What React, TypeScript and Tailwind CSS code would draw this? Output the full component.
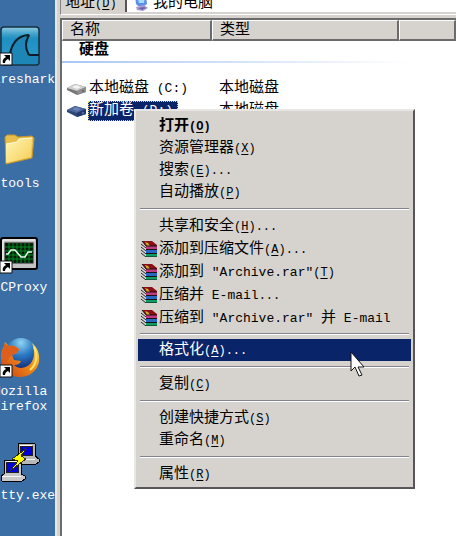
import { Fragment } from 'react';
import type { ReactNode } from 'react';
import clsx from 'clsx';

interface MenuEntry {
  text: string;
  hotkey?: string;
  dots?: boolean;
  bold?: boolean;
  archive?: boolean;
  active?: boolean;
}

const menuGroups: MenuEntry[][] = [
  [
    { text: '打开', hotkey: 'O', bold: true },
    { text: '资源管理器', hotkey: 'X' },
    { text: '搜索', hotkey: 'E', dots: true },
    { text: '自动播放', hotkey: 'P' },
  ],
  [
    { text: '共享和安全', hotkey: 'H', dots: true },
    { text: '添加到压缩文件', hotkey: 'A', dots: true, archive: true },
    { text: '添加到 "Archive.rar"', hotkey: 'T', archive: true },
    { text: '压缩并 E-mail', dots: true, archive: true },
    { text: '压缩到 "Archive.rar" 并 E-mail', archive: true },
  ],
  [{ text: '格式化', hotkey: 'A', dots: true, active: true }],
  [{ text: '复制', hotkey: 'C' }],
  [
    { text: '创建快捷方式', hotkey: 'S' },
    { text: '重命名', hotkey: 'M' },
  ],
  [{ text: '属性', hotkey: 'R' }],
];

// Latin runs are set smaller so that two of them take about one Chinese character
function Mixed({ children }: { children: string }) {
  return (
    <>
      {children.split(/([\x20-\x7e]+)/).map((part, i) =>
        i % 2 === 1 ? (
          <span key={i} className="text-[13px]">
            {part}
          </span>
        ) : (
          <Fragment key={i}>{part}</Fragment>
        ),
      )}
    </>
  );
}

function Hotkey({ letter }: { letter: string }) {
  return (
    <span className="text-[12px]">
      (<u className="underline-offset-2">{letter}</u>)
    </span>
  );
}

function ShortcutArrow() {
  return (
    <g>
      <path d="M0 27h12v12H0z" fill="#fff" stroke="#111" />
      <path d="M4 29h6v6l-2-2c-2 1-3 2-3 4H3c-1-3 1-5 3-6z" fill="#000" />
    </g>
  );
}

function SharkIcon() {
  return (
    <svg viewBox="0 0 40 40" className="size-10" aria-hidden="true">
      <defs>
        <linearGradient id="sea" x1="0" y1="0" x2="0" y2="1">
          <stop offset="0" stopColor="#8fcbe2" />
          <stop offset="0.2" stopColor="#3ba0c9" />
          <stop offset="0.3" stopColor="#2090c2" />
          <stop offset="1" stopColor="#2b9ccb" />
        </linearGradient>
      </defs>
      <rect x="1" y="1" width="38" height="38" rx="3" fill="url(#sea)" stroke="#14303f" strokeWidth="1.5" />
      <path d="M10 30c2-12 8-19 19-21-4 6-4 13-1 19h10v10H11z" fill="#1e86b6" />
      <path
        d="M10 28c2-11 8-18 18-19 1 0 1 1 0 2-3 6-2 12 0 16 0 1 1 2 3 2h8"
        fill="none"
        stroke="#0d1c26"
        strokeWidth="2"
      />
      <ShortcutArrow />
    </svg>
  );
}

function FolderIcon() {
  return (
    <svg viewBox="0 0 40 40" className="size-10" aria-hidden="true">
      <defs>
        <linearGradient id="folder" x1="0" y1="0" x2="1" y2="1">
          <stop offset="0" stopColor="#fff6b5" />
          <stop offset="1" stopColor="#f5cd55" />
        </linearGradient>
      </defs>
      <path d="M5 7l2-2h8l3 2 14-1 2 2-2 20-26 6z" fill="#e9bd49" stroke="#c4942b" />
      <path d="M6 14l11-2 2-3 13-1-1 19-25 6z" fill="url(#folder)" />
      <path d="M6 14l11-2 2-3 13-1" fill="none" stroke="#fffbdc" />
    </svg>
  );
}

function ScopeIcon() {
  return (
    <svg viewBox="0 0 40 40" className="size-10" aria-hidden="true">
      <rect x="1" y="4" width="36" height="31" rx="2" fill="#c3c3c3" stroke="#000" strokeWidth="2" />
      <path d="M3 33V6h32" fill="none" stroke="#fff" />
      <rect x="5" y="9" width="28" height="20" fill="#001b00" stroke="#222" />
      <path
        d="M9 9v20M13 9v20M17 9v20M21 9v20M25 9v20M29 9v20M5 13h28M5 17h28M5 21h28M5 25h28"
        stroke="#008a24"
        fill="none"
      />
      <path d="M6 20h2l3-4h4l6 7h4l3-5h4" fill="none" stroke="#e8fff0" strokeWidth="1.5" />
      <ShortcutArrow />
    </svg>
  );
}

function FoxIcon() {
  return (
    <svg viewBox="0 0 40 40" className="size-10" aria-hidden="true">
      <defs>
        <radialGradient id="globe" cx="0.5" cy="0.15" r="0.8">
          <stop offset="0" stopColor="#8ed4f2" />
          <stop offset="0.5" stopColor="#2b78c2" />
          <stop offset="1" stopColor="#132f7c" />
        </radialGradient>
        <linearGradient id="tail" x1="1" y1="0" x2="0" y2="1">
          <stop offset="0" stopColor="#ffe65c" />
          <stop offset="0.45" stopColor="#ee8d1c" />
          <stop offset="1" stopColor="#c9380f" />
        </linearGradient>
      </defs>
      <circle cx="21" cy="16" r="16" fill="url(#globe)" />
      <path
        d="M32 5c6 5 8 12 7 19-2 9-10 15-19 15C9 39 1 31 1 20 1 15 2 11 4 8l1-4 4 4c4-1 7 0 10 3l-2 4-5 2 2 5 7 1c-1 3-4 4-7 4 5 5 13 3 17-2 4-6 4-12 1-20z"
        fill="url(#tail)"
      />
      <path d="M5 6c-4 7-4 15 0 22 3-5 3-9 8-11l5-3 1-3c-3-3-6-4-10-3z" fill="#dc5f1e" />
      <path d="M34 9c4 8 3 17-4 23" fill="none" stroke="#ffe36a" strokeWidth="2" />
      <ShortcutArrow />
    </svg>
  );
}

function PuttyIcon() {
  return (
    <svg viewBox="0 0 40 40" className="size-10" shapeRendering="crispEdges" aria-hidden="true">
      <path d="M19 1h15l1 1v12l4 3v3l-3 2H17l-1-2v-4l2-2V2z" fill="#b7b7b7" stroke="#000" />
      <path d="M20 3h12" stroke="#fff" />
      <rect x="20" y="4" width="12" height="9" fill="#0000d8" stroke="#222" />
      <path d="M17 17h18" stroke="#f4f4f4" />
      <path d="M5 18h15l1 1v13l4 2v3l-3 2H2l-1-2v-3l3-2V19z" fill="#c8c8c8" stroke="#000" />
      <path d="M6 19h13" stroke="#fff" />
      <rect x="6" y="20" width="12" height="10" fill="#0000d8" stroke="#222" />
      <path d="M2 34h19" stroke="#f4f4f4" />
      <path d="M27 6l-15 11 6 2-8 10 16-12-5-3z" fill="#ffff00" stroke="#303000" />
    </svg>
  );
}

function DriveIcon({ selected = false }: { selected?: boolean }) {
  return (
    <svg viewBox="0 0 20 14" className="h-[14px] w-5 shrink-0" aria-hidden="true">
      <path d="M0 6l8-4 11 3v5l-9 3-10-5z" fill={selected ? '#2c4677' : '#777'} />
      <path d="M0 6l8-4 11 3-9 4z" fill={selected ? '#4d679b' : '#cfcfcf'} />
      <path d="M5 5l4-2 5 2-4 2z" fill={selected ? '#6c85b5' : '#f4f4f4'} />
      <path d="M10 9l9-4v5l-9 3z" fill={selected ? '#223a6c' : '#8d8d8d'} />
      <path d="M15 9h2" stroke={selected ? '#7aa0d0' : '#4b4b4b'} />
    </svg>
  );
}

function ComputerIcon() {
  return (
    <svg viewBox="0 0 16 16" className="size-4 shrink-0" aria-hidden="true">
      <path d="M2 0h11l1 8-3 2H5L3 8z" fill="#5c8fe8" />
      <path d="M4 0h8l-1 7H6z" fill="#a8dcfb" />
      <path d="M3 11l8-2 4 3-5 3-6-1z" fill="#a89bd4" />
      <path d="M5 12l6-1 2 1-4 2z" fill="#6f62a8" />
    </svg>
  );
}

function BooksIcon() {
  return (
    <svg viewBox="0 0 16 16" className="size-4" aria-hidden="true">
      <path d="M1 1l5 4v11l-5-4z" fill="#d9d9d9" />
      <path d="M0 3l5 4M0 6l5 4M0 9l5 4M0 12l5 4" stroke="#222" />
      <path d="M1 0h10l5 4v1H5z" fill="#8c0f14" />
      <path d="M4 1l3 1 2 3H6z" fill="#d2b02a" />
      <path d="M5 5h11v3H5z" fill="#c03a80" />
      <path d="M5 9h11v3H5z" fill="#2468c4" />
      <path d="M5 13h11v3H5z" fill="#0f9c63" />
      <path d="M1 0l4 5h11M5 8.5h11M5 12.5h11M5 16h11" fill="none" stroke="#1a1212" />
    </svg>
  );
}

function PointerIcon() {
  return (
    <svg viewBox="0 0 16 28" className="pointer-events-none absolute left-[212px] top-3 z-10 h-7 w-4" aria-hidden="true">
      <path d="M1 1v19l4-4 4 9 3-1-4-8h6z" fill="#fff" stroke="#111" />
    </svg>
  );
}

function DesktopIcon({ icon, lines }: { icon: ReactNode; lines: string[] }) {
  return (
    <button type="button" className="flex h-[104px] w-10 shrink-0 flex-col items-center">
      {icon}
      <span className="mt-1.5 whitespace-nowrap text-center text-[13px] leading-[15px] text-white">
        {lines.map((line) => (
          <span key={line} className="block">
            {line}
          </span>
        ))}
      </span>
    </button>
  );
}

function MenuItem({ item }: { item: MenuEntry }) {
  return (
    <button
      type="button"
      role="menuitem"
      className={clsx(
        'relative flex h-[22px] w-full items-center gap-0.5 whitespace-pre pl-[3px] text-left',
        item.bold && 'font-bold',
        item.active && 'bg-[#0a246a] text-white',
      )}
    >
      <span className="w-4 shrink-0">{item.archive && <BooksIcon />}</span>
      <span className="pt-0.5">
        <Mixed>{item.text}</Mixed>
        {item.hotkey && <Hotkey letter={item.hotkey} />}
        {item.dots && <span className="text-[12px]">...</span>}
      </span>
      {item.active && <PointerIcon />}
    </button>
  );
}

function ContextMenu() {
  return (
    <div
      role="menu"
      className="absolute left-[134px] top-[109px] w-[281px] border-2 border-b-[#55555a] border-l-[#e9e7e3] border-r-[#55555a] border-t-[#e9e7e3] bg-[#d6d3ce] p-0.5 pt-1"
    >
      {menuGroups.map((group, i) => (
        <Fragment key={i}>
          {i > 0 && (
            <hr
              className={clsx(
                'mx-0.5 h-0.5 border-b border-t border-b-white border-t-[#84828a]',
                i === 2 ? 'my-1' : 'my-[5px]',
              )}
            />
          )}
          <div className={clsx('flex flex-col', i === 1 && 'gap-px')}>
            {group.map((item) => (
              <MenuItem key={item.text} item={item} />
            ))}
          </div>
        </Fragment>
      ))}
    </div>
  );
}

function AddressBar() {
  return (
    <div className="flex h-[15px] items-end border-b border-l border-b-white border-l-[#84828a] bg-[#d6d3ce]">
      <label htmlFor="address" className="flex w-16 items-end whitespace-pre pb-0.5 pl-1 leading-4">
        <span>
          <Mixed>地址</Mixed>
          <Hotkey letter="D" />
        </span>
      </label>
      <div className="mb-0.5 flex h-[13px] flex-1 items-end gap-1 border-l-2 border-[#55555a] bg-white pl-1.5">
        <ComputerIcon />
        <input
          id="address"
          defaultValue="我的电脑"
          className="h-4 min-w-0 flex-1 bg-transparent leading-4 outline-none"
        />
      </div>
    </div>
  );
}

function ExplorerWindow() {
  const headCell =
    'h-5 border-b-2 border-l border-r-2 border-t border-b-[#6b6b6b] border-l-white border-r-[#6b6b6b] border-t-white bg-[#d6d3ce] pb-0 pl-[7px] pt-0.5 text-left font-normal leading-4';

  return (
    <section className="flex min-w-0 flex-1 flex-col border-l-2 border-[#e9e7e3] bg-[#d6d3ce] pl-[3px]">
      <AddressBar />
      <div className="mt-[3px] flex-1 border-l-2 border-t-2 border-[#6b6b6b] bg-white">
        <table className="w-full table-fixed border-separate border-spacing-0">
          <colgroup>
            <col className="w-[150px]" />
            <col className="w-[187px]" />
            <col />
          </colgroup>
          <thead>
            <tr>
              <th className={headCell}>名称</th>
              <th className={headCell}>类型</th>
              <th className={headCell} aria-label="其他" />
            </tr>
          </thead>
          <tbody>
            <tr>
              <th colSpan={3} className="h-[37px] p-0 text-left align-top">
                <span className="block pl-[17px] leading-5">硬盘</span>
                <span className="block h-0.5 w-[350px] max-w-full bg-linear-to-r from-[#a9c6f3] to-white" />
              </th>
            </tr>
            <tr className="h-[22px]">
              <td className="p-0">
                <span className="flex items-center whitespace-pre pl-[5px] leading-5">
                  <DriveIcon />
                  <span className="ml-0.5">
                    <Mixed>本地磁盘 (C:)</Mixed>
                  </span>
                </span>
              </td>
              <td className="p-0 pl-[7px]">本地磁盘</td>
              <td className="p-0" />
            </tr>
            <tr className="h-[22px]" aria-selected="true">
              <td className="p-0">
                <span className="flex items-center whitespace-pre pl-[5px] leading-[18px]">
                  <DriveIcon selected />
                  <span className="ml-px border border-dotted border-[#e8d37a] bg-[#0a246a] pr-1 text-white">
                    <Mixed>新加卷 (D:)</Mixed>
                  </span>
                </span>
              </td>
              <td className="p-0 pl-[7px]">本地磁盘</td>
              <td className="p-0" />
            </tr>
          </tbody>
        </table>
      </div>
    </section>
  );
}

export default function App() {
  return (
    <main className="relative flex h-screen overflow-hidden bg-[#3a6ea5] font-['Liberation_Mono','Noto_Sans_CJK_SC',monospace] text-[15px] leading-5 text-black">
      <nav aria-label="桌面" className="flex w-[55px] shrink-0 flex-col overflow-hidden pt-[26px]">
        <DesktopIcon icon={<SharkIcon />} lines={['Wireshark']} />
        <DesktopIcon icon={<FolderIcon />} lines={['tools']} />
        <DesktopIcon icon={<ScopeIcon />} lines={['CCProxy']} />
        <DesktopIcon icon={<FoxIcon />} lines={['Mozilla', 'Firefox']} />
        <DesktopIcon icon={<PuttyIcon />} lines={['putty.exe']} />
      </nav>
      <ExplorerWindow />
      <ContextMenu />
    </main>
  );
}
